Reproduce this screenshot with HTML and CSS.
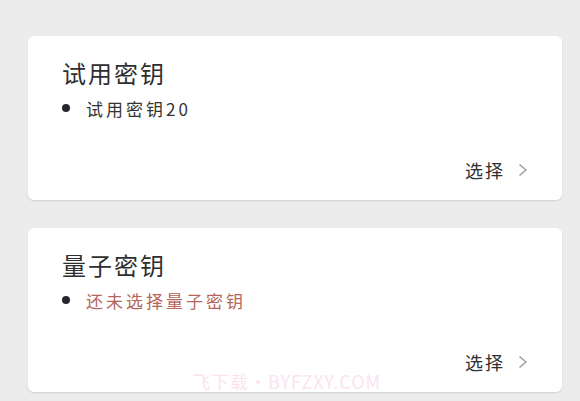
FILE: index.html
```html
<!DOCTYPE html>
<html>
<head>
    <title>密钥选择</title>
    <link rel="stylesheet" href="styles.css">
</head>
<body>
    <div class="content">
        <div class="card">
            <div class="card-title">试用密钥</div>
            <div class="item">
                <span class="dot"></span>
                <span class="item-text">试用密钥20</span>
            </div>
            <div class="card-footer">
                <span class="select">选择</span>
                <svg class="chevron" width="10" height="14" viewBox="0 0 10 14">
                    <path d="M1.5 1.5 L8 7 L1.5 12.5" fill="none" stroke="#9a9a9a" stroke-width="1.4"/>
                </svg>
            </div>
        </div>
        <div class="card">
            <div class="card-title">量子密钥</div>
            <div class="item">
                <span class="dot"></span>
                <span class="item-text warn">还未选择量子密钥</span>
            </div>
            <div class="card-footer">
                <span class="select">选择</span>
                <svg class="chevron" width="10" height="14" viewBox="0 0 10 14">
                    <path d="M1.5 1.5 L8 7 L1.5 12.5" fill="none" stroke="#9a9a9a" stroke-width="1.4"/>
                </svg>
            </div>
        </div>
    </div>
    <div class="watermark">飞下载・BYFZXY.COM</div>
</body>
</html>
```

FILE: styles.css
```css
body {
    font-family: "Noto Sans CJK SC", "Noto Sans", sans-serif;
    margin: 0;
    padding: 0;
    background-color: #ececec;
    color: #333;
    position: relative;
    height: 100vh;
    overflow: hidden;
}
.content {
    padding: 36px 18px 0 28px;
    display: flex;
    flex-direction: column;
    gap: 28px;
}
.card {
    background-color: #fff;
    border-radius: 6px;
    box-shadow: 0 1px 2px rgba(0, 0, 0, 0.12);
    height: 164px;
    box-sizing: border-box;
    padding: 22px 34px 18px 34px;
    display: flex;
    flex-direction: column;
}
.card-title {
    font-size: 24px;
    line-height: 30px;
    letter-spacing: 2px;
    color: #2f2f2f;
}
.item {
    display: flex;
    align-items: center;
    margin-top: 8px;
    height: 24px;
}
.dot {
    width: 8px;
    height: 8px;
    border-radius: 50%;
    background-color: #262633;
    margin-right: 16px;
}
.item-text {
    font-size: 17px;
    letter-spacing: 3px;
    color: #333;
}
.item-text.warn {
    color: #b5655b;
}
.card-footer {
    margin-top: auto;
    display: flex;
    align-items: center;
    justify-content: flex-end;
    height: 24px;
}
.select {
    font-size: 18px;
    letter-spacing: 2px;
    color: #2f2f2f;
}
.chevron {
    margin-left: 13px;
}
.watermark {
    position: absolute;
    left: 192px;
    top: 368px;
    font-size: 18px;
    letter-spacing: 1px;
    color: #fce3f1;
}
```
